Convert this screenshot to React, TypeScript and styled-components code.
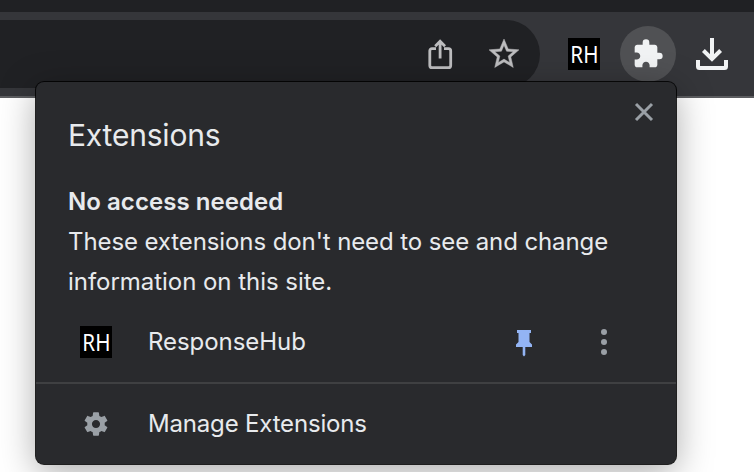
import React from 'react';
import styled, { createGlobalStyle } from 'styled-components';

const GlobalStyle = createGlobalStyle`
  * { box-sizing: border-box; }
  body {
    margin: 0;
    background: #fff;
    font-family: Inter, "Liberation Sans", sans-serif;
    overflow: hidden;
  }
`;

const Browser = styled.div`
  position: relative;
  width: 754px;
  height: 472px;
  overflow: hidden;
  background: #fff;
`;

const TabStrip = styled.div`
  height: 12px;
  background: #202124;
`;

const Toolbar = styled.div`
  display: flex;
  height: 86px;
  padding-top: 8px;
  background: #35363a;
  border-bottom: 2px solid #5c5d60;
`;

const AddressBar = styled.div`
  display: flex;
  align-items: center;
  justify-content: flex-end;
  gap: 28px;
  width: 540px;
  height: 68px;
  padding-right: 18px;
  border-radius: 0 34px 34px 0;
  background: #202124;
`;

const Actions = styled.div`
  display: flex;
  align-items: center;
  height: 68px;
  padding-left: 28px;
`;

const Badge = styled.div`
  display: flex;
  align-items: center;
  justify-content: center;
  width: 32px;
  height: 32px;
  background: #000;
  color: #fff;
  font-family: "Noto Sans", sans-serif;
  font-size: 24px;
  line-height: 32px;
`;

const BadgeText = styled.span`
  transform: scaleX(0.86);
`;

const RoundButton = styled.div`
  display: flex;
  align-items: center;
  justify-content: center;
  width: 56px;
  height: 56px;
  margin: 0 20px;
  border-radius: 50%;
  background: #505154;
`;

const Icon = styled.svg<{ $size: number }>`
  display: block;
  flex: none;
  width: ${(p) => p.$size}px;
  height: ${(p) => p.$size}px;
`;

const Popup = styled.section`
  position: absolute;
  left: 36px;
  top: 82px;
  width: 640px;
  height: 382px;
  border-radius: 8px;
  background: #292a2d;
  color: #e8eaed;
  box-shadow: 0 0 0 1px rgba(0, 0, 0, 0.85), 0 8px 36px rgba(0, 0, 0, 0.34);
`;

const Header = styled.header`
  display: flex;
  justify-content: space-between;
  height: 100px;
  padding: 18px 20px 0 32px;
`;

const Title = styled.h1`
  margin: 15px 0 0;
  font-size: 30px;
  font-weight: 400;
  line-height: 40px;
  letter-spacing: -0.2px;
`;

const Description = styled.div`
  height: 120px;
  padding-left: 32px;
  font-size: 24px;
  line-height: 40px;
  white-space: nowrap;
`;

const Line = styled.div<{ $bold?: boolean; $spacing: number }>`
  font-weight: ${(p) => (p.$bold ? 600 : 400)};
  letter-spacing: ${(p) => p.$spacing}px;
`;

const Row = styled.div<{ $height: number }>`
  display: flex;
  align-items: center;
  height: ${(p) => p.$height}px;
  padding: 0 56px 0 44px;
`;

const RowIcon = styled.div`
  display: flex;
  justify-content: center;
  width: 32px;
  margin-right: 36px;
`;

const RowLabel = styled.div<{ $spacing: number }>`
  flex: 1;
  font-size: 24px;
  line-height: 40px;
  letter-spacing: ${(p) => p.$spacing}px;
`;

const RowActions = styled.div`
  display: flex;
  gap: 48px;
`;

const Divider = styled.div`
  height: 2px;
  background: #3f4042;
`;

const ResponseHubIcon = () => (
  <Badge>
    <BadgeText>RH</BadgeText>
  </Badge>
);

const ShareIcon = () => (
  <Icon $size={36} viewBox="0 0 36 36" fill="none" stroke="#bdbdbf" strokeWidth="2.8">
    <path d="M14 12.6H10a2.2 2.2 0 0 0-2.2 2.2v14.6a2.2 2.2 0 0 0 2.2 2.2h16.500a2.200 2.200 0 0 0 2.200-2.200V14.800a2.200 2.200 0 0 0-2.200-2.200H22" />
    <path d="M18.100 22.500V6M13.200 10.200l4.900-4.900 4.900 4.900" />
  </Icon>
);

const StarIcon = () => (
  <Icon $size={36} viewBox="0 0 24 24" fill="#bdbdbf" stroke="#bdbdbf" strokeWidth="0.3">
    <path d="M22 9.24l-7.19-.62L12 2 9.19 8.63 2 9.24l5.46 4.73L5.82 21 12 17.27 18.18 21l-1.63-7.03L22 9.24zM12 15.4l-3.76 2.27 1-4.28-3.32-2.88 4.38-.38L12 6.1l1.71 4.04 4.38.38-3.32 2.88 1 4.28L12 15.4z" />
  </Icon>
);

const PuzzleIcon = () => (
  <Icon $size={32} viewBox="0 0 24 24" fill="#f1f3f4">
    <path d="M20.5 11H19V7c0-1.1-.9-2-2-2h-4V3.500a2.500 2.500 0 0 0-5 0V5H4c-1.100 0-1.990.9-1.990 2v3.800H3.500c1.490 0 2.700 1.210 2.700 2.700s-1.210 2.700-2.700 2.700H2V20c0 1.100.9 2 2 2h3.800v-1.500c0-1.490 1.210-2.700 2.700-2.700s2.700 1.210 2.700 2.700V22H17c1.100 0 2-.9 2-2v-4h1.500a2.500 2.500 0 0 0 0-5z" />
  </Icon>
);

const DownloadIcon = () => (
  <Icon $size={32} viewBox="0 0 32 32" fill="none" stroke="#f1f3f4" strokeWidth="4">
    <path d="M16 0v21M7.400 12.500L16 21l8.600-8.500" />
    <path d="M2 22v6.500a1.500 1.500 0 0 0 1.500 1.500h25a1.500 1.500 0 0 0 1.500-1.500V22" />
  </Icon>
);

const CloseIcon = () => (
  <Icon $size={24} viewBox="0 0 24 24" stroke="#9aa0a6" strokeWidth="3">
    <path d="M4 4l16 16M20 4L4 20" />
  </Icon>
);

const PinIcon = () => (
  <Icon $size={32} viewBox="0 0 32 32" fill="#93b4f4">
    <path d="M9 4h14v3h-1.500v9L24 18.600V21h-6.700v8L16 30.500 14.700 29v-8H8v-2.400L10.500 16V7H9z" />
  </Icon>
);

const MoreIcon = () => (
  <Icon $size={32} viewBox="0 0 32 32" fill="#9aa0a6">
    <circle cx="16" cy="6" r="3" />
    <circle cx="16" cy="16" r="3" />
    <circle cx="16" cy="26" r="3" />
  </Icon>
);

const GearIcon = () => (
  <Icon $size={28} viewBox="0 0 24 24" fill="#9aa0a6">
    <path d="M19.430 12.980c.040-.320.070-.640.070-.980s-.030-.660-.070-.980l2.110-1.650c.190-.150.240-.420.120-.640l-2-3.460c-.120-.220-.390-.300-.610-.220l-2.490 1c-.520-.400-1.080-.730-1.690-.980l-.380-2.650C14.460 2.180 14.250 2 14 2h-4c-.250 0-.460.180-.490.420l-.380 2.650c-.610.250-1.170.590-1.690.980l-2.490-1c-.230-.090-.490 0-.610.220l-2 3.460c-.130.220-.070.490.120.640l2.110 1.650c-.040.320-.070.650-.070.980s.030.660.070.980l-2.110 1.650c-.190.150-.240.420-.120.640l2 3.460c.120.220.390.300.610.220l2.490-1c.520.400 1.080.730 1.690.980l.380 2.650c.030.240.240.420.490.420h4c.250 0 .460-.180.490-.420l.380-2.650c.610-.250 1.170-.590 1.690-.980l2.490 1c.230.090.490 0 .610-.220l2-3.460c.120-.220.070-.490-.120-.640l-2.110-1.650zM12 15.500c-1.930 0-3.500-1.570-3.500-3.500s1.570-3.500 3.500-3.500 3.500 1.570 3.500 3.500-1.570 3.500-3.500 3.500z" />
  </Icon>
);

export default function App() {
  return (
    <Browser>
      <GlobalStyle />
      <TabStrip />
      <Toolbar>
        <AddressBar>
          <ShareIcon />
          <StarIcon />
        </AddressBar>
        <Actions>
          <ResponseHubIcon />
          <RoundButton>
            <PuzzleIcon />
          </RoundButton>
          <DownloadIcon />
        </Actions>
      </Toolbar>
      <Popup>
        <Header>
          <Title>Extensions</Title>
          <CloseIcon />
        </Header>
        <Description>
          <Line $bold $spacing={0.05}>No access needed</Line>
          <Line $spacing={-0.1}>These extensions don't need to see and change</Line>
          <Line $spacing={-0.04}>information on this site.</Line>
        </Description>
        <Row $height={80}>
          <RowIcon>
            <ResponseHubIcon />
          </RowIcon>
          <RowLabel $spacing={-0.05}>ResponseHub</RowLabel>
          <RowActions>
            <PinIcon />
            <MoreIcon />
          </RowActions>
        </Row>
        <Divider />
        <Row $height={80}>
          <RowIcon>
            <GearIcon />
          </RowIcon>
          <RowLabel $spacing={-0.18}>Manage Extensions</RowLabel>
        </Row>
      </Popup>
    </Browser>
  );
}
